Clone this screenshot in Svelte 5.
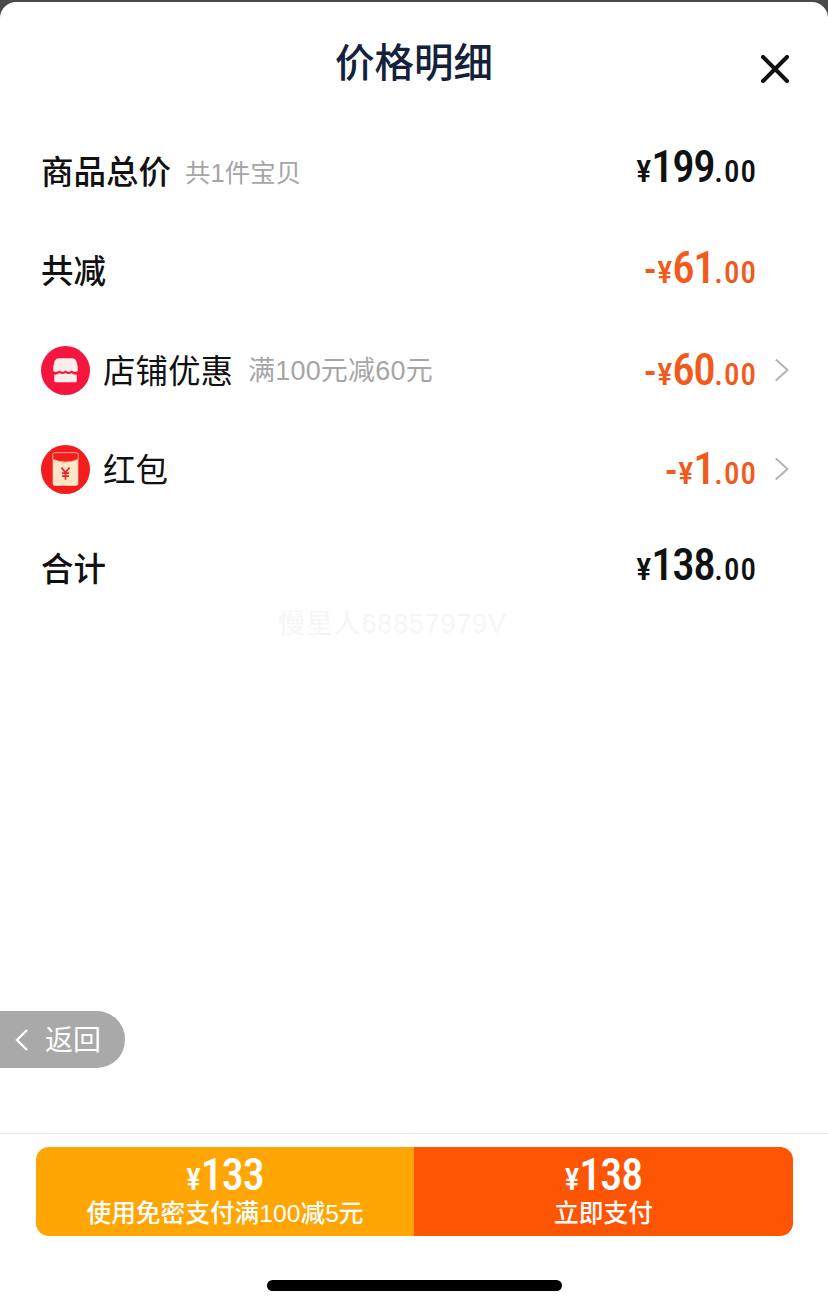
<script lang="ts">
  const rows = [
    { id: "total", label: "商品总价", note: "共1件宝贝", sign: "", int: "199", strong: true, lift: 11 },
    { id: "minus", label: "共减", note: "", sign: "-", int: "61", strong: true, off: true, lift: 7 },
    { id: "shop", label: "店铺优惠", note: "满100元减60元", wide: true, sign: "-", int: "60", icon: "shop", off: true, more: true, lift: 1 },
    { id: "red", label: "红包", note: "", sign: "-", int: "1", icon: "red", off: true, more: true, lift: 1 },
    { id: "sum", label: "合计", note: "", sign: "", int: "138", strong: true, lift: 9 },
  ];
</script>

<div class="page">
  <div class="sheet">
    <header class="head">
      <h1>价格明细</h1>
      <svg class="close" viewBox="0 0 28 28" width="28" height="28" aria-label="关闭">
        <path d="M2 2 L26 26 M26 2 L2 26" stroke="#111" stroke-width="4" stroke-linecap="round" fill="none" />
      </svg>
    </header>

    <div class="list">
      {#each rows as row (row.id)}
        <div class="row">
          {#if row.icon === "shop"}
            <svg class="icon" viewBox="0 0 48 48" width="49" height="49">
              <circle cx="24" cy="24" r="24" fill="#f5153f" />
              <path d="M17 12 H31 Q33.500 12 34.500 14.500 L36 20 V24.500 Q33 26.500 30 24 Q27 26.500 24 24 Q21 26.500 18 24 Q15 26.500 12 24.500 V20 L13.500 14.500 Q14.500 12 17 12 Z" fill="#fdeee9" />
              <path d="M13 28 Q15.500 28.500 18 26.500 Q21 28.500 24 26.500 Q27 28.500 30 26.500 Q32.500 28.500 35 28 V34 Q35 35.500 33.500 35.500 H14.500 Q13 35.500 13 34 Z" fill="#fdeee9" />
            </svg>
          {:else if row.icon === "red"}
            <svg class="icon" viewBox="0 0 48 48" width="49" height="49">
              <circle cx="24" cy="24" r="24" fill="#f41d1d" />
              <path d="M11.500 14 Q24 19.500 36.500 14 V38 Q36.500 40 34.500 40 H13.500 Q11.500 40 11.500 38 Z" fill="#fde6c6" />
              <path d="M11.500 14 V9.500 Q11.500 7.500 13.500 7.500 H34.500 Q36.500 7.500 36.500 9.500 V14 Q24 19.500 11.500 14 Z" fill="#f41d1d" stroke="#fbb0a0" stroke-width="0.900" />
              <path d="M20 22 L24 27 L28 22 M24 27 V34 M20.500 27.500 H27.500 M20.500 30.500 H27.500" stroke="#e8262a" stroke-width="1.700" fill="none" />
            </svg>
          {/if}
          <span class="label" class:strong={row.strong}>{row.label}</span>
          {#if row.note}<span class="note" class:wide={row.wide}>{row.note}</span>{/if}
          <span class="price" class:off={row.off} class:shift={row.more} style:margin-bottom="{row.lift}px">
            {#if row.sign}<span class="sign">{row.sign}</span>{/if}<span class="yen">¥</span><span class="int">{row.int}</span><span class="dec">.00</span>
          </span>
          {#if row.more}
            <svg class="chev" viewBox="0 0 14 24" width="14" height="24">
              <path d="M0.800 1.500 L12.500 12 L0.800 22.500" stroke="#b4b4b4" stroke-width="2" fill="none" />
            </svg>
          {/if}
        </div>
      {/each}
    </div>

    <div class="mark">慢星人68857979V</div>

    <div class="back">
      <svg viewBox="0 0 14 24" width="14" height="24">
        <path d="M12 2 L2 12 L12 22" stroke="#fff" stroke-width="2.400" fill="none" />
      </svg>
      <span>返回</span>
    </div>

    <footer class="foot">
      <div class="buttons">
        <button type="button" class="btn alt">
          <span class="amount"><span class="yen">¥</span>133</span>
          <span class="cap">使用免密支付满100减5元</span>
        </button>
        <button type="button" class="btn main">
          <span class="amount"><span class="yen">¥</span>138</span>
          <span class="cap">立即支付</span>
        </button>
      </div>
      <div class="home"></div>
    </footer>
  </div>
</div>

<style>
  :global(body) {
    margin: 0;
    background: #4a4a4a;
  }

  .page {
    height: 1308px;
    padding-top: 2px;
    box-sizing: border-box;
    font-family: "Noto Sans CJK SC", "Noto Sans", sans-serif;
  }

  .sheet {
    position: relative;
    height: 100%;
    background: #fff;
    border-radius: 16px 16px 0 0;
    display: flex;
    flex-direction: column;
    overflow: hidden;
  }

  .head {
    height: 120px;
    flex: none;
    position: relative;
    display: flex;
    justify-content: center;
  }

  h1 {
    margin: 32px 0 0;
    font-size: 39.500px;
    line-height: 52px;
    font-weight: 500;
    color: #14213a;
  }

  .close {
    position: absolute;
    right: 39px;
    top: 53px;
  }

  .list {
    display: flex;
    flex-direction: column;
  }

  .row {
    height: 99.250px;
    display: flex;
    align-items: center;
    padding: 0 39px 0 41px;
  }

  .icon {
    flex: none;
    margin: 1px 13px 0 0;
  }

  .label {
    font-size: 32.500px;
    color: #111;
    font-weight: 400;
    margin-bottom: 3px;
  }

  .label.strong {
    font-weight: 500;
    margin-bottom: 5px;
  }

  .note {
    margin-left: 14px;
    font-family: "Liberation Sans", "Noto Sans CJK SC", sans-serif;
    font-size: 25.500px;
    color: #a6a6a6;
    margin-bottom: 3px;
  }

  .note.wide {
    margin-left: 15px;
    font-size: 27px;
    letter-spacing: 0.200px;
  }

  .price {
    margin-left: auto;
    margin-right: 33px;
    color: #111;
    font-family: "Roboto Condensed", "Roboto", sans-serif;
    font-stretch: 75%;
    font-weight: 500;
    display: flex;
    align-items: baseline;
  }

  .price.shift {
    margin-right: 19px;
  }

  .price.off {
    color: #f25a1c;
  }

  .sign {
    font-size: 40px;
    line-height: 1;
    margin-right: 1px;
  }

  .yen {
    font-size: 32px;
  }

  .int {
    font-size: 45px;
    letter-spacing: -1.500px;
  }

  .dec {
    font-size: 31px;
    letter-spacing: 1px;
    margin-right: -1px;
  }

  .mark {
    position: absolute;
    left: 278px;
    top: 600px;
    font-family: "Liberation Sans", "Noto Sans CJK SC", sans-serif;
    font-size: 27px;
    letter-spacing: 0.800px;
    color: #f6f6f6;
    white-space: nowrap;
  }

  .back {
    position: absolute;
    left: 0;
    top: 1009px;
    width: 125px;
    height: 57px;
    box-sizing: border-box;
    padding-left: 15px;
    display: flex;
    align-items: center;
    gap: 16px;
    background: #a9a9a9;
    color: #fff;
    border-radius: 0 28px 28px 0;
    font-size: 28px;
  }

  .back span {
    margin-bottom: 3px;
  }

  .foot {
    margin-top: auto;
    height: 175px;
    flex: none;
    box-sizing: border-box;
    border-top: 1px solid #ececec;
    padding: 13px 35px 0 36px;
    display: flex;
    flex-direction: column;
  }

  .buttons {
    display: flex;
    height: 89px;
    border-radius: 13px;
    overflow: hidden;
  }

  .btn {
    border: 0;
    padding: 5px 0 0;
    color: #fff;
    font: inherit;
    display: flex;
    flex-direction: column;
    align-items: center;
  }

  .btn.alt {
    width: 378px;
    background: #ffa605;
  }

  .btn.main {
    flex: 1;
    background: #fe5504;
  }

  .amount {
    font-family: "Roboto Condensed", "Roboto", sans-serif;
    font-stretch: 75%;
    font-size: 44px;
    line-height: 46px;
    font-weight: 500;
    letter-spacing: -1px;
  }

  .amount .yen {
    font-size: 31px;
    margin-right: 1px;
  }

  .cap {
    font-family: "Liberation Sans", "Noto Sans CJK SC", sans-serif;
    font-size: 24.700px;
    line-height: 30px;
    font-weight: 500;
    margin-top: -4px;
  }

  .home {
    width: 295px;
    height: 11px;
    border-radius: 6px;
    background: #000;
    margin: 44px 0 0 231px;
  }
</style>
